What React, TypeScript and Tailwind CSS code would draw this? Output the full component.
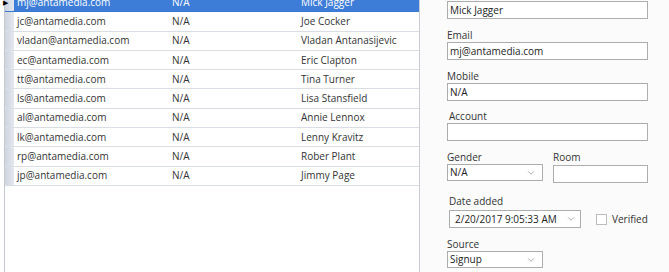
import React from 'react';
import { ChevronDown } from 'lucide-react';

interface Contact {
  email: string;
  mobile: string;
  name: string;
}

const CONTACTS: Contact[] = [
  { email: 'mj@antamedia.com', mobile: 'N/A', name: 'Mick Jagger' },
  { email: 'jc@antamedia.com', mobile: 'N/A', name: 'Joe Cocker' },
  { email: 'vladan@antamedia.com', mobile: 'N/A', name: 'Vladan Antanasijevic' },
  { email: 'ec@antamedia.com', mobile: 'N/A', name: 'Eric Clapton' },
  { email: 'tt@antamedia.com', mobile: 'N/A', name: 'Tina Turner' },
  { email: 'ls@antamedia.com', mobile: 'N/A', name: 'Lisa Stansfield' },
  { email: 'al@antamedia.com', mobile: 'N/A', name: 'Annie Lennox' },
  { email: 'lk@antamedia.com', mobile: 'N/A', name: 'Lenny Kravitz' },
  { email: 'rp@antamedia.com', mobile: 'N/A', name: 'Rober Plant' },
  { email: 'jp@antamedia.com', mobile: 'N/A', name: 'Jimmy Page' },
];

const font = { fontFamily: '"Open Sans", "Liberation Sans", sans-serif' };

function TextBox({ value = '', className = '' }: { value?: string; className?: string }) {
  return (
    <div className={`h-[18px] whitespace-nowrap border border-[#adadad] bg-white pl-[2px] text-[10px] leading-[16px] text-[#222] ${className}`}>
      {value}
    </div>
  );
}

function Combo({ value, className = '' }: { value: string; className?: string }) {
  return (
    <div className={`flex h-[17px] items-center justify-between border border-[#adadad] bg-white pl-[2px] pr-[6px] text-[10px] text-[#222] ${className}`}>
      <span>{value}</span>
      <ChevronDown className="h-[10px] w-[10px] text-[#777]" strokeWidth={1.5} />
    </div>
  );
}

function Label({ children, className = '' }: { children: React.ReactNode; className?: string }) {
  return <div className={`h-[14px] text-[10px] leading-[14px] text-[#333] ${className}`}>{children}</div>;
}

export default function App() {
  return (
    <div className="flex h-[272px] w-[669px] overflow-hidden bg-[#fbfbfb]" style={font}>
      {/* Grid */}
      <div className="relative h-full w-[420px] border-r border-[#c9cdd3] bg-white">
        <div className="absolute left-[4px] top-0 h-full w-px bg-[#c4c9d0]" />
        <div className="mt-[-7px] pl-[5px]">
          {CONTACTS.map((c, i) => {
            const selected = i === 0;
            return (
              <div
                key={c.email}
                className={`flex h-[19.3px] items-center whitespace-nowrap border-b text-[10px] ${
                  selected ? 'border-[#3a78d2] bg-[#3d7dd8] text-white' : 'border-[#d9dee5] text-[#333]'
                }`}
              >
                <div className="relative flex h-full w-[9px] items-center justify-center rounded-[1px] bg-gradient-to-r from-[#cfd5de] to-[#e4e8ee]">
                  {selected && (
                    <span className="absolute left-[-2px] text-[7px] leading-none text-black">▶</span>
                  )}
                </div>
                <div className="w-[158px] pl-[3px]">{c.email}</div>
                <div className="w-[129px]">{c.mobile}</div>
                <div className="flex-1">{c.name}</div>
              </div>
            );
          })}
        </div>
      </div>

      {/* Details */}
      <div className="flex-1 pl-[27px] pr-[21px] pt-px">
        <TextBox value="Mick Jagger" />
        <Label className="mt-[9px]">Email</Label>
        <TextBox value="mj@antamedia.com" />
        <Label className="mt-[9px]">Mobile</Label>
        <TextBox value="N/A" />
        <Label className="mt-[8px] pl-[2px]">Account</Label>
        <TextBox />
        <div className="mt-[9px] flex gap-[10px]">
          <div className="w-[96px]">
            <Label>Gender</Label>
            <Combo value="N/A" />
          </div>
          <div className="flex-1">
            <Label>Room</Label>
            <TextBox className="mt-px h-[17px]" />
          </div>
        </div>
        <Label className="mt-[11px] pl-[2px]">Date added</Label>
        <div className="mt-[2px] flex items-center">
          <div className="ml-[2px] flex h-[18px] w-[132px] items-center justify-between whitespace-nowrap border border-[#adadad] bg-white pl-[5px] pr-[4px] text-[10px] text-[#222]">
            <span>2/20/2017 9:05:33 AM</span>
            <ChevronDown className="h-[10px] w-[10px] text-[#777]" strokeWidth={1.5} />
          </div>
          <div className="ml-[15px] h-[11px] w-[11px] border border-[#bdbdbd] bg-white" />
          <span className="ml-[5px] text-[10px] text-[#333]">Verified</span>
        </div>
        <Label className="mt-[9px]">Source</Label>
        <Combo value="Signup" className="w-[96px]" />
      </div>
    </div>
  );
}
